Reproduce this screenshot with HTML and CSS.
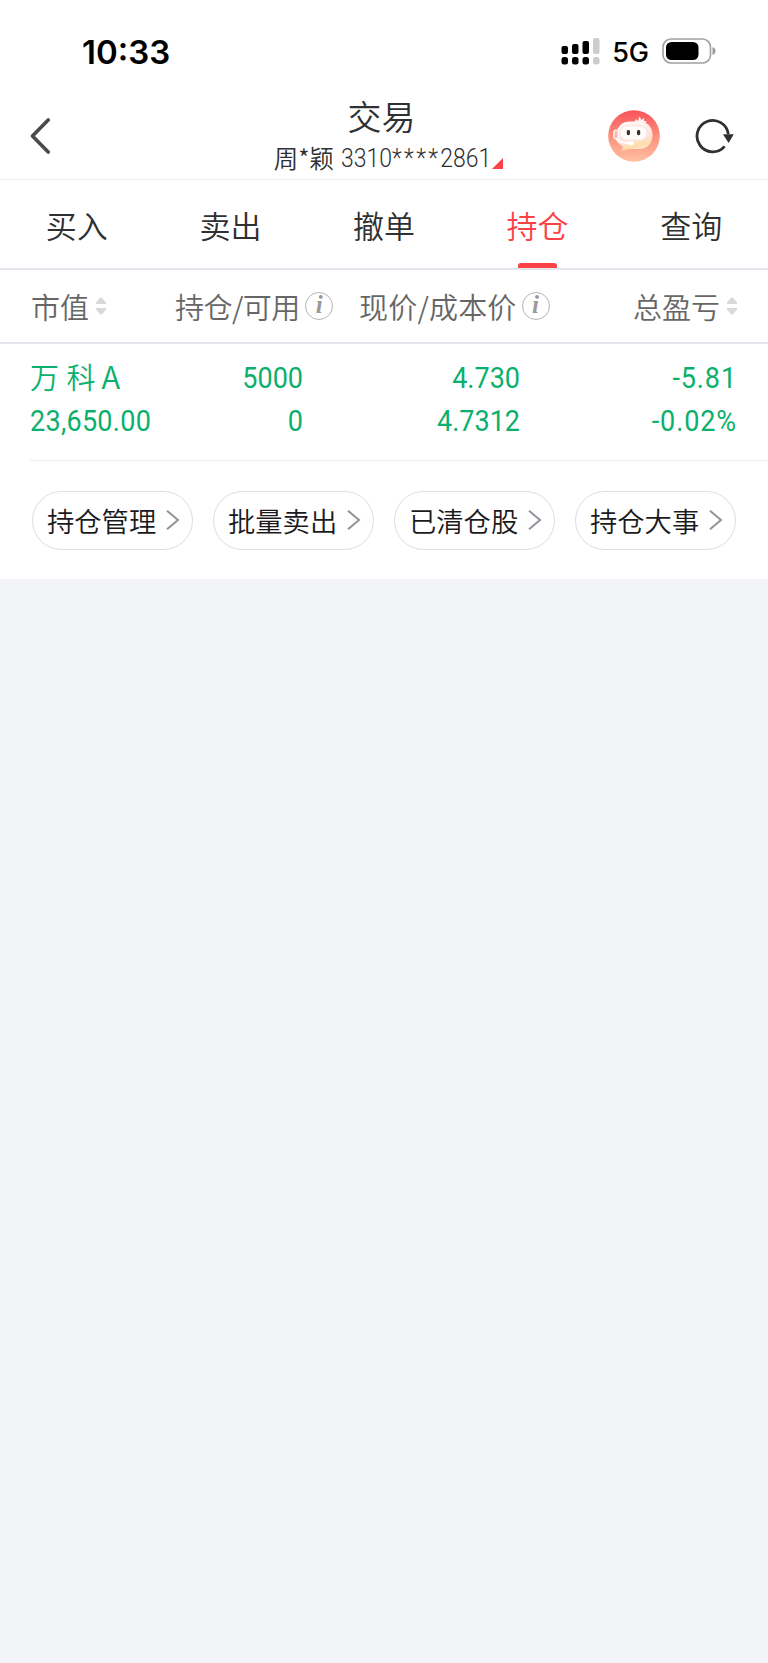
FILE: index.html
```html
<!DOCTYPE html>
<html lang="zh-CN">
<head>
  <meta charset="UTF-8">
  <title>交易</title>
  <link rel="stylesheet" href="styles.css">
</head>
<body>
  <div class="statusbar">
    <span class="time">10:33</span>
    <div class="status-right">
      <svg class="signal" width="40" height="28" viewBox="0 0 40 28">
        <rect x="0.5" y="9" width="6.5" height="8" rx="2"/>
        <rect x="11" y="7" width="6.5" height="10" rx="2"/>
        <rect x="21.5" y="4" width="6.5" height="13" rx="2"/>
        <rect class="off" x="32" y="1" width="6.5" height="16" rx="2"/>
        <rect x="0.5" y="20" width="6.5" height="7.5" rx="2.5"/>
        <rect x="11" y="20" width="6.5" height="7.5" rx="2.5"/>
        <rect x="21.5" y="20" width="6.5" height="7.5" rx="2.5"/>
        <rect class="off" x="32" y="20" width="6.5" height="7.5" rx="2.5"/>
      </svg>
      <span class="network">5G</span>
      <svg class="battery" width="54" height="26" viewBox="0 0 54 26">
        <rect x="1" y="1" width="47.5" height="24" rx="8" fill="none" stroke="#a0a0a0" stroke-width="1.6"/>
        <rect x="4" y="4" width="32.5" height="18" rx="5.5" fill="#000"/>
        <path d="M50.5 9Q53.5 10.2 53.5 13T50.5 17Z" fill="#999"/>
      </svg>
    </div>
  </div>

  <header class="header">
    <svg class="back" width="22" height="36" viewBox="0 0 22 36">
      <path d="M18.2 2L2.5 18L18.2 34" fill="none" stroke="#4a4a4a" stroke-width="3.6" stroke-linecap="round" stroke-linejoin="round"/>
    </svg>
    <div class="heading">
      <h1>交易</h1>
      <div class="account">
        <span>周*颖</span>
        <span class="account-no">3310<span class="stars">****</span>2861</span>
        <svg class="corner" width="11" height="11" viewBox="0 0 11 11"><path d="M11 0V11H0Z" fill="#fb4247"/></svg>
      </div>
    </div>
    <div class="actions">
      <svg width="52" height="52" viewBox="0 0 52 52">
        <defs>
          <linearGradient id="bg" x1="0" y1="0" x2="0" y2="1">
            <stop offset="0" stop-color="#f7535a"/>
            <stop offset="0.55" stop-color="#fc9580"/>
            <stop offset="1" stop-color="#ffc0a2"/>
          </linearGradient>
          <linearGradient id="head" x1="0.3" y1="0" x2="0.6" y2="1">
            <stop offset="0" stop-color="#fff8f6"/>
            <stop offset="0.6" stop-color="#ffe2dc"/>
            <stop offset="0.85" stop-color="#ffdca6"/>
            <stop offset="1" stop-color="#fff0e6"/>
          </linearGradient>
        </defs>
        <circle cx="26" cy="26" r="25.8" fill="url(#bg)"/>
        <path d="M26 13L28 9L30 11L31.5 6.5L33.5 10L36 8L36 11L38.5 11L37 15Z" fill="#fff0ed"/>
        <path d="M22 11.5H32C40 11.5 45 18 44.5 26C44 34 38.5 39 31 39H21.5Q18 39.5 13 41Q15.5 38.5 14.5 36C9 33.5 7 29 8 24C9.5 16 14.5 11.5 22 11.5Z" fill="url(#head)"/>
        <rect x="12" y="16" width="27" height="14" rx="7" fill="#fff" fill-opacity="0.9" stroke="#ffe4dd"/>
        <rect x="5.8" y="20" width="4.5" height="9" rx="2.2" fill="#ffb9aa" stroke="#fff" stroke-width="1.2"/>
        <path d="M8 28.5C10 31.5 14 33 22 33" fill="none" stroke="#fff" stroke-width="1.8"/>
        <rect x="19.5" y="31.5" width="6.5" height="3.5" rx="1.7" fill="#fff"/>
        <rect x="18.8" y="20" width="3.2" height="5.2" rx="1.4" fill="#3c302d"/>
        <rect x="29" y="20" width="3.2" height="5.2" rx="1.4" fill="#3c302d"/>
      </svg>
      <svg class="refresh" width="40" height="36" viewBox="0 0 40 36">
        <path d="M29.6 28.4A15.7 15.7 0 1 1 33.3 16.2" fill="none" stroke="#2f3031" stroke-width="2.8"/>
        <path d="M28 16.2H38.8L33.6 25Z" fill="#2f3031"/>
      </svg>
    </div>
  </header>

  <nav class="tabs">
    <a class="tab">买入</a>
    <a class="tab">卖出</a>
    <a class="tab">撤单</a>
    <a class="tab active">持仓</a>
    <a class="tab">查询</a>
  </nav>

  <div class="columns">
    <div class="col col-value">市值
      <svg class="sort" width="10" height="18" viewBox="0 0 10 18"><path d="M0 7V5.5L4 .8Q5 0 6 .8L10 5.5V7ZM0 11H10V12.5L6 17.2Q5 18 4 17.2L0 12.5Z"/></svg>
    </div>
    <div class="col col-hold">持仓/可用
      <span class="info">i</span>
    </div>
    <div class="col col-price">现价/成本价
      <span class="info">i</span>
    </div>
    <div class="col col-profit">总盈亏
      <svg class="sort" width="10" height="18" viewBox="0 0 10 18"><path d="M0 7V5.5L4 .8Q5 0 6 .8L10 5.5V7ZM0 11H10V12.5L6 17.2Q5 18 4 17.2L0 12.5Z"/></svg>
    </div>
  </div>

  <div class="stock">
    <div class="cell cell-left">
      <div class="name">万 科<span class="share">A</span></div>
      <div class="num">23,650.00</div>
    </div>
    <div class="cell">
      <div class="num">5000</div>
      <div class="num">0</div>
    </div>
    <div class="cell">
      <div class="num">4.730</div>
      <div class="num">4.7312</div>
    </div>
    <div class="cell cell-profit">
      <div class="num">-5.81</div>
      <div class="num">-0.02%</div>
    </div>
  </div>

  <div class="links">
    <a class="pill">持仓管理<svg width="14" height="20" viewBox="0 0 14 20"><path d="M1 .8L12 10L1 19.2"/></svg></a>
    <a class="pill">批量卖出<svg width="14" height="20" viewBox="0 0 14 20"><path d="M1 .8L12 10L1 19.2"/></svg></a>
    <a class="pill">已清仓股<svg width="14" height="20" viewBox="0 0 14 20"><path d="M1 .8L12 10L1 19.2"/></svg></a>
    <a class="pill">持仓大事<svg width="14" height="20" viewBox="0 0 14 20"><path d="M1 .8L12 10L1 19.2"/></svg></a>
  </div>
</body>
</html>
```
FILE: styles.css
```css
* { box-sizing: border-box; }
body {
  margin: 0;
  min-height: 1663px;
  background: #f2f4f8;
  font-family: "Noto Sans CJK SC", sans-serif;
  font-weight: 350;
  color: #2f3031;
}
svg { display: block; flex: none; }

.statusbar {
  height: 95px;
  padding: 8px 52px 0 82px;
  background: #fff;
  display: flex;
  align-items: center;
  justify-content: space-between;
  font-family: Inter, sans-serif;
  color: #000;
}
.time { font-size: 33px; font-weight: 600; }
.status-right { display: flex; align-items: center; margin-top: -1px; }
.network { font-size: 27px; font-weight: 500; margin: 2px 13px 0 11px; }
.signal .off { fill: #ccc; }

.header {
  height: 85px;
  padding: 0 35px 0 30px;
  background: #fff;
  border-bottom: 1px solid #efeff1;
  display: grid;
  grid-template-columns: 1fr auto 1fr;
  align-items: center;
}
.back { margin-top: -2px; }
.heading { margin-top: -1px; text-align: center; }
h1 {
  margin: 0;
  font-size: 34px;
  line-height: 42px;
  font-weight: 350;
}
.account {
  margin-right: -14px;
  display: flex;
  align-items: center;
  font-size: 24.5px;
  line-height: 38px;
}
.account-no {
  font-family: Roboto, sans-serif;
  font-size: 25px;
  margin: 3px -14px 0 7px;
  transform: scaleX(0.92);
  transform-origin: left;
}
.stars { letter-spacing: 2.5px; }
.corner { margin: 11px 0 0 2px; }
.actions {
  margin: -2px -2px 0 0;
  display: flex;
  align-items: center;
  justify-content: flex-end;
  gap: 35px;
}

.tabs {
  height: 90px;
  background: #fff;
  border-bottom: 2px solid #e5e6ed;
  display: grid;
  grid-template-columns: repeat(5, 1fr);
}
.tab {
  display: flex;
  flex-direction: column;
  align-items: center;
  font-size: 31px;
  line-height: 90px;
}
.active { color: #fb4247; }
.active::after {
  content: "";
  width: 39px;
  height: 5px;
  margin-top: -7px;
  border-radius: 3px 3px 0 0;
  background: #fb4247;
}

.columns {
  height: 74px;
  padding: 0 31px;
  background: #fff;
  border-bottom: 2px solid #e5e6ed;
  display: flex;
  align-items: center;
  font-size: 29px;
  color: #666;
}
.col { display: flex; align-items: center; white-space: nowrap; }
.col-value { width: 144px; }
.col-hold { width: 184px; letter-spacing: -0.5px; }
.col-price { letter-spacing: 0.2px; }
.col-profit { margin-left: auto; }
.sort { margin-left: 7px; fill: #d9d9d9; }
.info {
  width: 28px;
  height: 28px;
  margin-left: 5px;
  border: 1.5px solid #b4b4b4;
  border-radius: 50%;
  font: italic bold 25px/24px "Liberation Serif", serif;
  text-align: center;
  color: #999;
}

.stock {
  height: 117px;
  margin-left: 30px;
  padding-top: 12px;
  border-bottom: 1px solid #ecedf2;
  display: grid;
  grid-template-columns: 120px 153px 217px 217px;
  color: #0bb06c;
  line-height: 43px;
  text-align: right;
}
.cell-left { text-align: left; }
.name {
  height: 43px;
  font-size: 29px;
  line-height: 39px;
  white-space: nowrap;
  word-spacing: 1px;
}
.share { margin-left: 6px; font-size: 31px; }
.num {
  font-family: Roboto, sans-serif;
  font-size: 30px;
  font-weight: 400;
  transform: scaleX(0.9);
  transform-origin: right;
}
.cell-left .num { transform-origin: left; letter-spacing: 0.3px; }
.cell-profit .num { letter-spacing: 1px; }

.links {
  height: 118px;
  padding: 30px 32px 0;
  display: flex;
  gap: 20px;
}
.stock, .links { background: #fff; box-shadow: -30px 0 #fff; }
.pill {
  width: 161px;
  height: 59px;
  padding: 0 12px 2px 14px;
  border: 1.5px solid #dcdce4;
  border-radius: 30px;
  display: flex;
  align-items: center;
  justify-content: space-between;
  font-size: 27.3px;
  color: #1a1a1c;
}
.pill svg { fill: none; stroke: #92929c; stroke-width: 2; }
```
